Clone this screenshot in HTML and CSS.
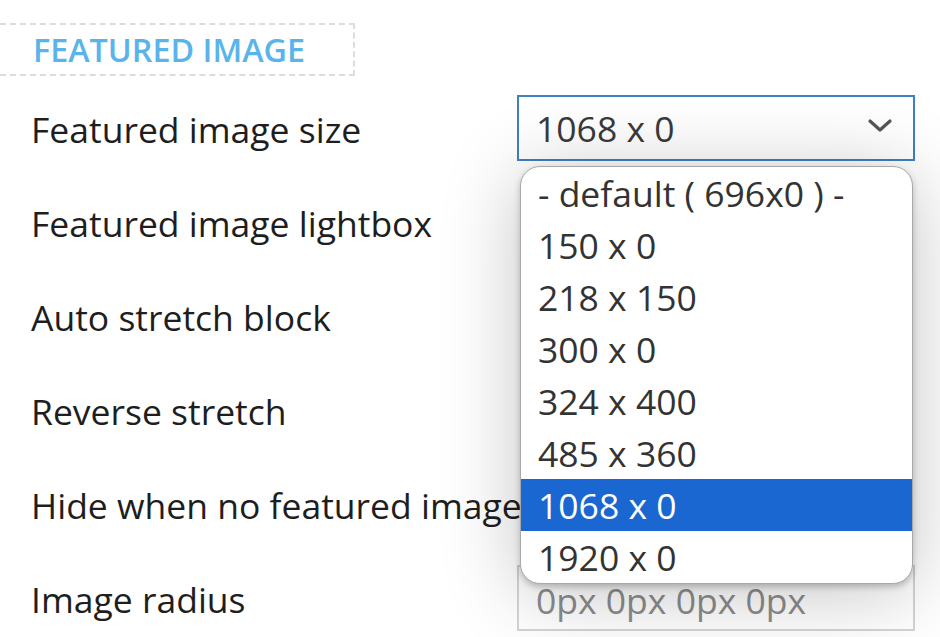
FILE: index.html
```html
<!DOCTYPE html>
<html lang="en">
<head>
<meta charset="utf-8">
<title>Featured image settings</title>
<link rel="stylesheet" href="styles.css">
</head>
<body>
<div class="panel">
  <div class="section-title"><span>FEATURED IMAGE</span></div>
  <div class="rows">
    <div class="label">Featured image size</div>
    <div class="control">
      <div class="select focused">
        <span class="value">1068 x 0</span>
        <svg class="chevron" width="26" height="16" viewBox="0 0 26 16"><path d="M3 3 L13 12 L23 3" fill="none" stroke="#555" stroke-width="3.2" stroke-linecap="round" stroke-linejoin="round"/></svg>
      </div>
      <ul class="dropdown">
        <li>- default ( 696x0 ) -</li>
        <li>150 x 0</li>
        <li>218 x 150</li>
        <li>300 x 0</li>
        <li>324 x 400</li>
        <li>485 x 360</li>
        <li class="selected">1068 x 0</li>
        <li>1920 x 0</li>
      </ul>
    </div>
    <div class="label">Featured image lightbox</div>
    <div class="control"></div>
    <div class="label">Auto stretch block</div>
    <div class="control"></div>
    <div class="label">Reverse stretch</div>
    <div class="control"></div>
    <div class="label">Hide when no featured image</div>
    <div class="control"></div>
    <div class="label">Image radius</div>
    <div class="control"><div class="input"><span class="placeholder">0px 0px 0px 0px</span></div></div>
  </div>
</div>
</body>
</html>
```
FILE: styles.css
```css
html, body {
  margin: 0;
  padding: 0;
  background: #ffffff;
}
body {
  font-family: "Open Sans", "Liberation Sans", sans-serif;
  color: #1e1e1e;
  width: 940px;
  height: 637px;
  overflow: hidden;
}
.panel {
  padding-top: 23px;
}
.section-title {
  width: 365px;
  height: 53px;
  box-sizing: border-box;
  margin-left: -10px;
  border: 2px dashed #dcdcdc;
  padding-left: 41px;
  display: flex;
  align-items: center;
}
.section-title span {
  font-size: 32.3px;
  font-weight: 600;
  color: #5ab4ec;
  line-height: 1;
}
.rows {
  margin-top: 19px;
  display: grid;
  grid-template-columns: 517px 398px;
  grid-auto-rows: 66px;
  row-gap: 28px;
}
.label {
  padding-left: 31px;
  font-size: 35.5px;
  line-height: 68px;
  white-space: nowrap;
  color: #1e1e1e;
}
.control {
  position: relative;
}
.select {
  height: 66px;
  box-sizing: border-box;
  border: 2px solid #3f7fc4;
  background: #fff;
  display: flex;
  align-items: center;
  justify-content: space-between;
  padding: 0 20px 0 17px;
}
.select .value {
  font-size: 35.5px;
  color: #3a3a3a;
}
.chevron {
  display: block;
  margin-top: -4px;
}
.input {
  height: 66px;
  box-sizing: border-box;
  border: 2px solid #d4d4d4;
  background: #fff;
  display: flex;
  align-items: center;
  padding-left: 17px;
  padding-top: 6px;
}
.placeholder {
  font-size: 35.5px;
  line-height: 1;
  color: #8c8c8c;
}
.dropdown {
  position: absolute;
  left: 3px;
  top: 71px;
  width: 393px;
  margin: 0;
  padding: 0;
  list-style: none;
  background: #fff;
  border: 1px solid #a9a9a9;
  border-radius: 20px;
  box-sizing: border-box;
  overflow: hidden;
  box-shadow: 0 3px 6px rgba(0, 0, 0, 0.22), 0 8px 80px rgba(0, 0, 0, 0.24);
  z-index: 10;
}
.dropdown li {
  height: 52px;
  line-height: 52px;
  padding-left: 17px;
  font-size: 35.5px;
  color: #333;
  white-space: nowrap;
}
.dropdown li.selected {
  background: #1a67d2;
  color: #fff;
}
```
